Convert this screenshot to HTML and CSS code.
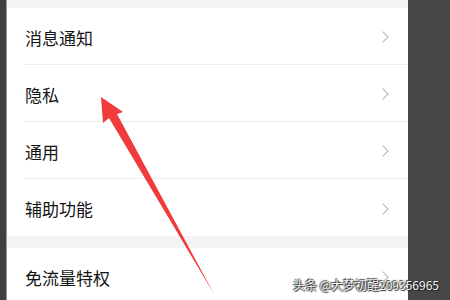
FILE: index.html
```html
<!DOCTYPE html>
<html lang="zh-CN">
<head>
<meta charset="utf-8">
<title>设置</title>
<link rel="stylesheet" href="styles.css">
</head>
<body>
<div class="frame">
  <div class="edge-left"></div>
  <div class="screen">
    <div class="band-top"></div>
    <div class="group">
      <div class="row"><span class="label">消息通知</span><span class="chev"></span></div>
      <div class="sep"></div>
      <div class="row"><span class="label">隐私</span><span class="chev"></span></div>
      <div class="sep"></div>
      <div class="row"><span class="label">通用</span><span class="chev"></span></div>
      <div class="sep"></div>
      <div class="row row-tall"><span class="label">辅助功能</span><span class="chev"></span></div>
    </div>
    <div class="band-gap"></div>
    <div class="group">
      <div class="row"><span class="label">免流量特权</span><span class="chev"></span></div>
    </div>
  </div>
  <div class="edge-right"></div>
  <svg class="arrow" width="450" height="300" viewBox="0 0 450 300">
    <polygon points="101,97 123,112 117,114 214,294 109,118 103,123" fill="#ef3b3b"/>
  </svg>
  <div class="watermark">头条 @大梦初醒209356965</div>
</div>
</body>
</html>
```

FILE: styles.css
```css
html, body {
  margin: 0;
  padding: 0;
}
body {
  width: 450px;
  height: 300px;
  overflow: hidden;
  font-family: "Noto Sans CJK SC", "Noto Sans", sans-serif;
}
.frame {
  position: relative;
  display: flex;
  width: 450px;
  height: 300px;
  overflow: hidden;
}
.edge-left {
  width: 6px;
  background: #3f3f3f;
  border-right: 1px solid #9a9a9a;
  flex: none;
}
.screen {
  width: 401px;
  background: #ffffff;
  display: flex;
  flex-direction: column;
  flex: none;
}
.edge-right {
  flex: 1;
  background: #474747;
}
.band-top {
  height: 8px;
  background: #f5f5f7;
  flex: none;
}
.band-gap {
  height: 12px;
  background: #f4f4f6;
  flex: none;
}
.group {
  display: flex;
  flex-direction: column;
}
.row {
  height: 56px;
  display: flex;
  align-items: center;
  justify-content: space-between;
  padding: 2px 18px 0 18px;
  box-sizing: border-box;
}
.row-tall {
  height: 57px;
}
.label {
  font-size: 17px;
  color: #141414;
}
.sep {
  height: 1px;
  margin-left: 17px;
  background: #ededed;
}
.chev {
  width: 7px;
  height: 7px;
  border-right: 1.5px solid #b5b5b5;
  border-top: 1.5px solid #b5b5b5;
  transform: rotate(45deg);
  margin-right: 3px;
}
.arrow {
  position: absolute;
  left: 0;
  top: 0;
  pointer-events: none;
}
.watermark {
  position: absolute;
  left: 293px;
  top: 276px;
  font-size: 12px;
  color: #ffffff;
  white-space: nowrap;
  text-shadow: 0 0 1px #000, 1px 1px 1px #222, -1px -1px 1px #444;
}
```
